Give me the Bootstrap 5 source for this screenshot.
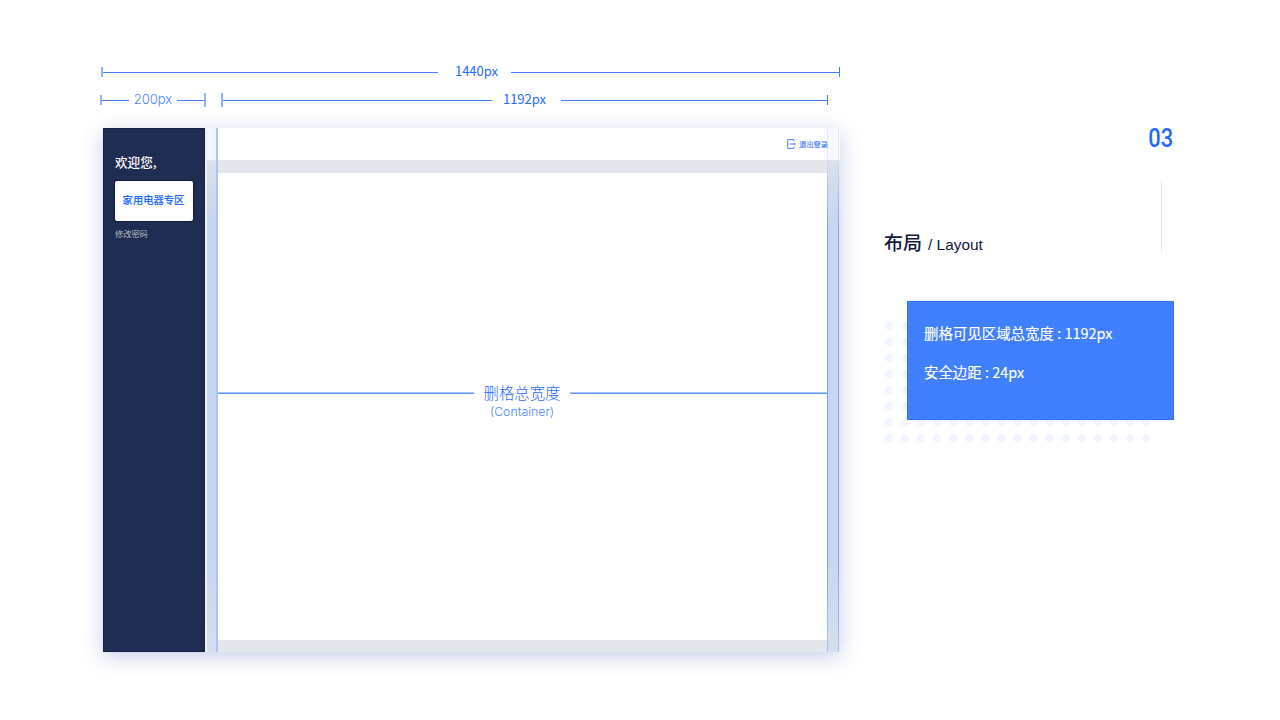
<!DOCTYPE html>
<html lang="zh-CN">
<head>
<meta charset="utf-8">
<meta name="viewport" content="width=device-width, initial-scale=1">
<title>布局 / Layout</title>
<link href="https://cdn.jsdelivr.net/npm/bootstrap@5.3.0/dist/css/bootstrap.min.css" rel="stylesheet">
<style>
body{width:1280px;height:720px;overflow:hidden;background:#fff;font-family:"Noto Sans CJK SC",sans-serif;color:#1f6bff}
.board{width:740px;margin-left:100px;padding-top:60px}
.ruler{height:24px;font-size:13px;line-height:22px}
.ruler span{padding-bottom:2px}
.ruler-full{margin-left:1px;width:739px}
.tick{width:2px;height:10px;background:#8db3fb;flex:none}
.tick-tall{height:14px}
.tick-thin{width:1px;background:#3f7cf5}
.rule{height:1px;background:#4580f5}
.thin-text{font-family:Inter,sans-serif;font-weight:300;color:#4a87ff}
.mock{width:737px;height:524px;margin:16px 0 0 3px;box-shadow:0 5px 20px rgba(70,100,190,.3);background:#fff}
.side{width:102px;padding:24px 12px;background:#202d53;box-shadow:inset 0 0 0 1px #14204a}
.welcome{font-size:12.6px;line-height:20px;color:#fff;font-weight:500;white-space:nowrap}
.zone{width:78px;height:40px;margin-top:9px;padding:0 1px 2px 0;border-radius:2px;background:#fff;box-shadow:0 0 0 1px #101b48;font-size:10.3px;font-weight:500;-webkit-text-stroke:.15px;white-space:nowrap}
.pwd{font-size:8.2px;line-height:12px;margin-top:6px;color:#b4b8c4}
.topbar{height:32px;background:#fff}
.exit{font-size:7.2px;line-height:12px;font-weight:400;-webkit-text-stroke:.15px;margin-right:12px;color:#3878ff;z-index:1}
.workspace{background:#e3e7eb;padding:12.5px 12px 12px 11px}
.sheet{background:#fff;height:100%}
.gutter{top:0;bottom:0;width:10px}
.gutter::before{content:"";position:absolute;left:0;right:0;top:0;height:32px;background:#f2f6ff}
.gutter::after{content:"";position:absolute;left:0;right:0;top:32px;bottom:0;background:linear-gradient(#dbe0e9,#c8d6f1 60px,#c8d6f1 400px,#d5deed)}
.gutter-left{left:2px;width:11px;border-right:2px solid #a8c5fb}
.pane::before{content:"";position:absolute;left:0;top:0;bottom:0;width:2px;background:#eef2fa}
.gutter-right{right:1px;width:12px;border-left:1px solid #e0e9fa;border-right:1px solid #e0e9fa}
.gutter-right::before{background:#f7faff}
.gutter-right::after{left:-1px;right:-1px;border:solid #8db2f8;border-width:0 1px;border-image:linear-gradient(#d4deef,#78a5fa 65px,#78a5fa 400px,#a5c3f8) 1}
.container-label{line-height:16px;width:96px}
.label-cn{font-size:15.4px;font-weight:300;line-height:17px;margin-bottom:3px}
.label-en{font-size:12.3px;line-height:16px}
.measure{height:2px;background:linear-gradient(#a5c5ff 50%,#6398fb 50%)}
.info{margin-left:44px;width:290px;padding-top:122px}
.num{font-family:Roboto,sans-serif;font-size:26px;line-height:32px;font-weight:500;padding-right:1px;transform:scaleX(.84);transform-origin:right}
.divider{width:1px;height:71px;background:#e4e6ec;margin:27px 12px 0 0}
.title{color:#101a40;height:28px;margin-top:-24px;line-height:28px}
.title-cn{font-size:19px;font-weight:500}
.title-en{font-family:"Liberation Sans",sans-serif;font-size:15.4px;margin-left:6px}
.note-wrap{margin-top:45px;height:148px;padding-left:22.5px}
.dots{left:-3px;top:17px;width:273px;height:128px;background:radial-gradient(circle at center,#f0f5ff 3.7px,transparent 4.3px) 0 0/16.05px 16.05px}
.note{width:267.5px;height:119px;background:#4080ff;box-shadow:inset 0 0 0 1px #2f70fb;color:#fff;padding:20px 17.5px;font-size:14.45px;line-height:24px;font-weight:400;-webkit-text-stroke:.15px}
</style>
</head>
<body class="d-flex align-items-start">
<main class="board flex-shrink-0">
  <div class="ruler ruler-full d-flex align-items-center">
    <i class="tick"></i><i class="rule" style="width:335px"></i><span class="text-center flex-fill ps-1">1440px</span><i class="rule" style="width:328px"></i><i class="tick tick-thin"></i>
  </div>
  <div class="d-flex mt-1">
    <div class="ruler d-flex align-items-center" style="width:106px">
      <i class="tick"></i><i class="rule" style="width:27px"></i><span class="thin-text text-center flex-fill">200px</span><i class="rule" style="width:27px"></i><i class="tick tick-tall"></i>
    </div>
    <div class="ruler d-flex align-items-center" style="width:607px;margin-left:15px">
      <i class="tick tick-tall"></i><i class="rule" style="width:269px"></i><span class="text-center flex-fill pe-1">1192px</span><i class="rule" style="width:266px"></i><i class="tick tick-thin"></i>
    </div>
  </div>
  <section class="mock d-flex">
    <aside class="side flex-shrink-0">
      <div class="welcome">欢迎您,</div>
      <div class="zone d-flex align-items-center justify-content-center">家用电器专区</div>
      <div class="pwd">修改密码</div>
    </aside>
    <div class="pane position-relative d-flex flex-column flex-fill">
      <span class="gutter gutter-left position-absolute"></span>
      <span class="gutter gutter-right position-absolute"></span>
      <header class="topbar d-flex align-items-center justify-content-end">
        <div class="exit d-flex align-items-center position-relative">
          <svg width="9" height="10" viewBox="0 0 9 10" fill="none" stroke="#3878ff" stroke-width=".9" style="margin-right:3px"><path d="M7 2.4V.6H.8v8.8H7V7.6M2.4 5h5.8M7 4 8.3 5 7 6"/></svg>
          <span>退出登录</span>
        </div>
      </header>
      <div class="workspace flex-fill">
        <div class="sheet d-flex align-items-start">
          <div class="d-flex w-100" style="padding-top:211px">
            <i class="measure" style="width:258px;margin-top:8px"></i>
            <div class="container-label text-center"><div class="label-cn">删格总宽度</div><div class="label-en thin-text">(Container)</div></div>
            <i class="measure flex-fill" style="margin-top:8px"></i>
          </div>
        </div>
      </div>
    </div>
  </section>
</main>
<aside class="info flex-shrink-0">
  <div class="num text-end">03</div>
  <div class="divider ms-auto"></div>
  <div class="title d-flex align-items-baseline"><span class="title-cn">布局</span><span class="title-en">/ Layout</span></div>
  <div class="note-wrap position-relative">
    <span class="dots position-absolute"></span>
    <div class="note position-relative"><div>删格可见区域总宽度 : 1192px</div><div style="margin-top:15px">安全边距 : 24px</div></div>
  </div>
</aside>
<script src="https://cdn.jsdelivr.net/npm/bootstrap@5.3.0/dist/js/bootstrap.bundle.min.js"></script>
</body>
</html>
